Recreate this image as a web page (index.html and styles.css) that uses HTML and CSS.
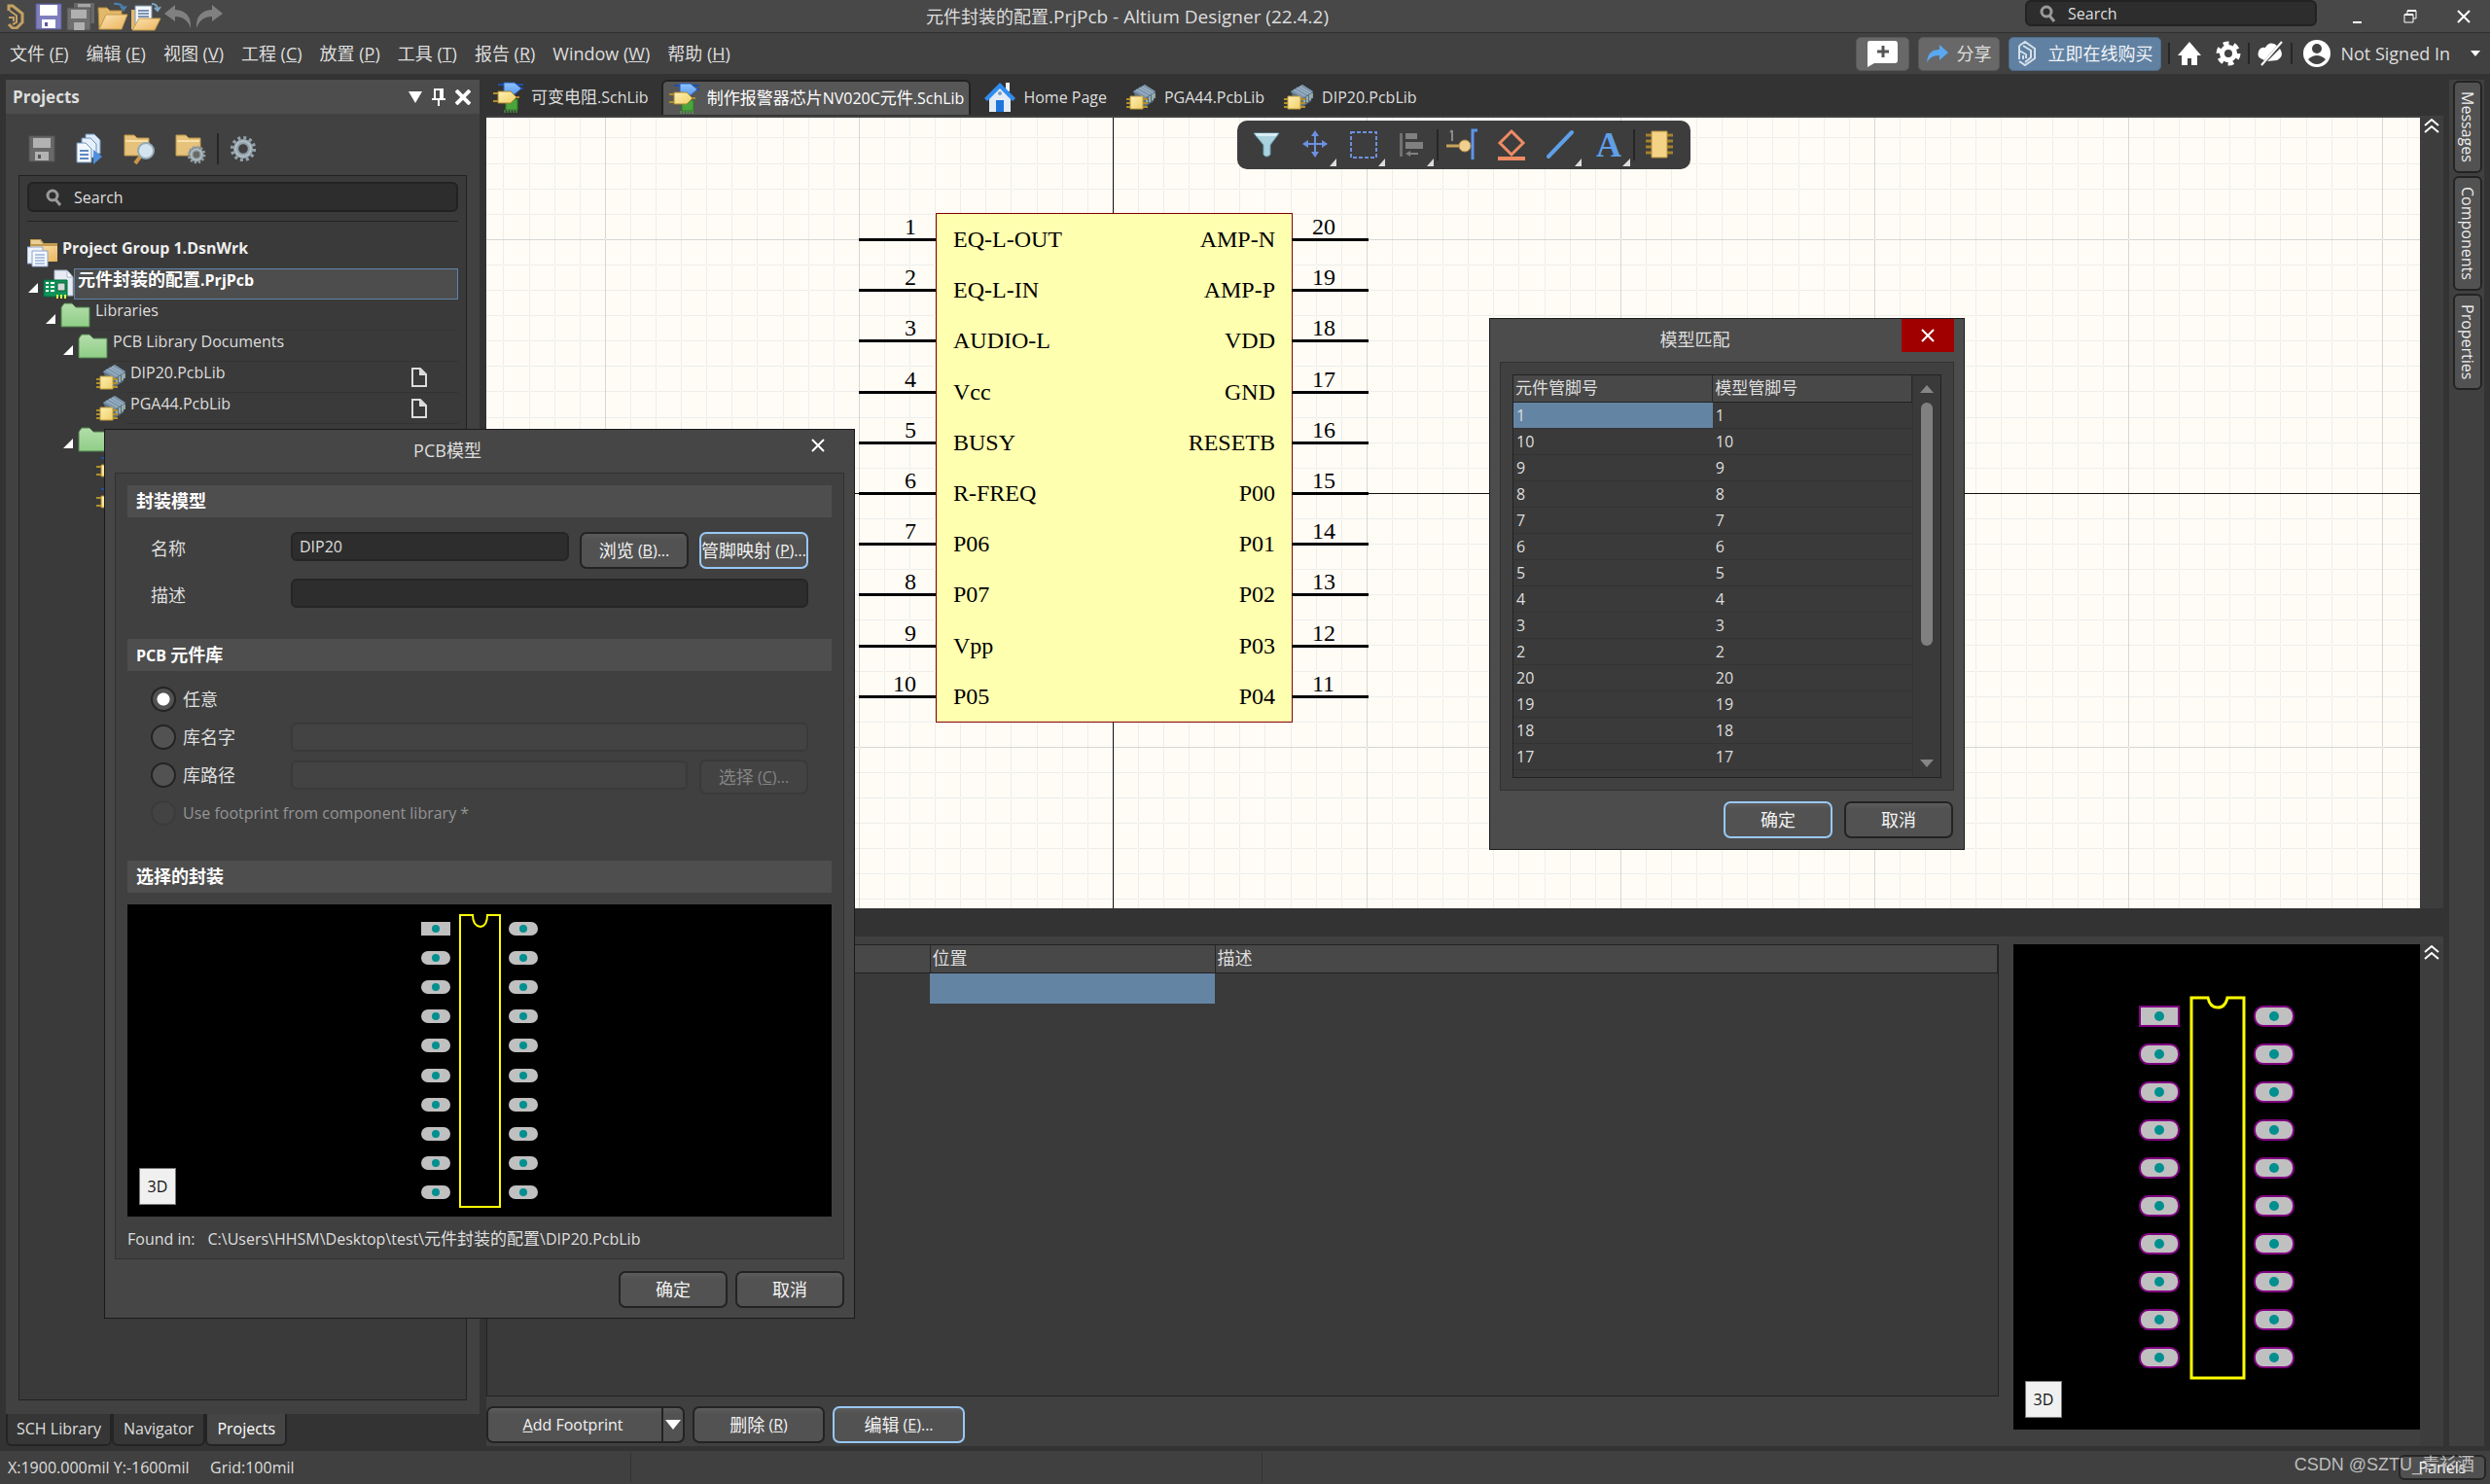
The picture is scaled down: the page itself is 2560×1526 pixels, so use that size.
FILE: index.html
```html
<!DOCTYPE html>
<html lang="zh-CN">
<head>
<meta charset="utf-8">
<title>元件封装的配置.PrjPcb - Altium Designer (22.4.2)</title>
<link rel="stylesheet" href="styles.css">
</head>
<body>
<svg class="defs" aria-hidden="true">
  <defs>
    <linearGradient id="g-green" x2="0" y2="1"><stop offset="0" stop-color="#b4ddab"/><stop offset="1" stop-color="#8fce86"/></linearGradient>
    <linearGradient id="g-tan" x2="1" y2="1"><stop offset="0" stop-color="#fbe3b4"/><stop offset="1" stop-color="#eab45c"/></linearGradient>
    <linearGradient id="g-chip" x2="1" y2="1"><stop offset="0" stop-color="#fdf0b4"/><stop offset="1" stop-color="#f0cf66"/></linearGradient>
    <linearGradient id="g-blue" x2="0" y2="1"><stop offset="0" stop-color="#8cc4ff"/><stop offset="1" stop-color="#5f9cf0"/></linearGradient>
    <pattern id="grid" x="644" y="386" width="261" height="261" patternUnits="userSpaceOnUse">
      <path d="M26 0h1v261h-1zM52 0h1v261h-1zM78 0h1v261h-1zM104 0h1v261h-1zM130 0h1v261h-1zM156 0h1v261h-1zM183 0h1v261h-1zM209 0h1v261h-1zM235 0h1v261h-1zM0 26v1h261v-1zM0 52v1h261v-1zM0 78v1h261v-1zM0 104v1h261v-1zM0 130v1h261v-1zM0 156v1h261v-1zM0 183v1h261v-1zM0 209v1h261v-1zM0 235v1h261v-1z" fill="#edeeea"/>
      <path d="M0 0h1v261h-1zM0 0v1h261v-1z" fill="#d6d7d3"/>
    </pattern>
  </defs>
  <symbol id="i-logo" viewBox="0 0 18 26"><path d="M2 7V2h4l10 8v9l-6 6H6l-4-4" fill="none" stroke="#c3a062" stroke-width="3"/><path d="M3 7l7 5v7l-4 2M2 14h5v4" fill="none" stroke="#c3a062" stroke-width="2"/></symbol>
  <symbol id="i-floppy" viewBox="0 0 28 28"><path d="M1 1h26v26H1z" fill="#7f7fbd" stroke="#5a5a9a"/><path d="M5 2h18v11H5zM7 17h14v9H7z" fill="#fff"/><path d="M10 20h3v4h-3z" fill="#5a5a9a"/></symbol>
  <symbol id="i-floppy-off" viewBox="0 0 28 28"><path d="M1 1h26v26H1z" fill="#686868" stroke="#555"/><path d="M5 3h18v10H5zM7 17h14v9H7z" fill="#b2b2b2"/><path d="M10 20h3v4h-3z" fill="#555"/></symbol>
  <symbol id="i-save-all" viewBox="0 0 30 30"><path d="M8 1h21v21H8z" fill="#686868"/><path d="M12 2h13v5H12z" fill="#a5a5a5"/><path d="M1 6h24v23H1z" fill="#707070" stroke="#505050"/><path d="M5 8h16v9H5zM8 21h11v8H8z" fill="#b0b0b0"/></symbol>
  <symbol id="i-open" viewBox="0 0 32 30"><path d="M1 6h9l3 3h12v5H9L2 28z" fill="#e2b96a" stroke="#b98c3c"/><path d="M9 13h22l-6 15H2z" fill="url(#g-tan)" stroke="#c79a48"/><path d="M17 2q9-1 10 6" fill="none" stroke="#4b7fae" stroke-width="2"/><path d="M23 5l8-1-4 6z" fill="#4b7fae"/></symbol>
  <symbol id="i-open-doc" viewBox="0 0 32 30"><path d="M1 8h5v20H1z" fill="#e2b96a"/><path d="M5 4h17v22H5z" fill="#f4f7fc" stroke="#7d93b3"/><path d="M8 9h11M8 12h11M8 15h11" stroke="#7d93b3" stroke-width="2"/><path d="M9 17h22l-6 12H2z" fill="url(#g-tan)" stroke="#c79a48"/><path d="M22 2q6 0 6 6M25 6l3 3 3-4" fill="none" stroke="#7ea5c5" stroke-width="2"/></symbol>
  <symbol id="i-undo" viewBox="0 0 30 26"><path d="M12 1L1 10l11 8v-5q12 0 16 12Q29 7 12 6z" fill="#808080"/></symbol>
  <symbol id="i-sch" viewBox="0 0 32 32"><path d="M6 3h26M24 7h8" stroke="#1d4fa8" stroke-width="2"/><path d="M12 1h11l7 6-7 6H12z" fill="url(#g-blue)" stroke="#2b5fb8"/><path d="M14 18h12v11H14z" fill="#4aa63c" stroke="#2e7a25"/><path d="M13 32v-3m3 3v-3m3 3v-3m3 3v-3m3 3v-3" stroke="#5cb84e"/><path d="M1 12h8M1 20h8M22 16h6" stroke="#b0902a" stroke-width="2"/><path d="M6 10h13l6 6-6 6H6z" fill="url(#g-chip)" stroke="#a8842a"/></symbol>
  <symbol id="i-pcblib" viewBox="0 0 32 28"><path d="M8 8L20 1l11 7-2 10-9 6-8-6z" fill="#5d7181"/><path d="M8 8L20 1l11 7-11 7z" fill="#7d96ad"/><path d="M11 6l12 7M14 4l12 7M17 3l12 7" stroke="#a9bdcc"/><path d="M22 15v6m3-8v6m3-8v6m2-7v5" stroke="#a9c0bd" stroke-width="1.5"/><path d="M1 16h5M1 20h5M1 24h5M17 16h6M17 20h6M17 24h6" stroke="#b0902a" stroke-width="2"/><path d="M5 13h13v13H5z" fill="url(#g-chip)" stroke="#c29c3e"/></symbol>
  <symbol id="i-home" viewBox="0 0 32 32"><path d="M22 1h4v9h-4z" fill="#eef2f8"/><path d="M5 14L16 4l11 10v17H5z" fill="#e4ebf4"/><path d="M16 1L0 17l3 3L16 7l13 13 3-3z" fill="#2f8df0"/><path d="M12 19h8v12h-8z" fill="#1c74dc"/><circle cx="16" cy="12" r="2" fill="#7e9cc0"/></symbol>
  <symbol id="i-docs" viewBox="0 0 28 32"><path d="M10 1h9l6 6v14H10z" fill="#dce9f6" stroke="#6f93bd"/><path d="M6 5h9l6 6v14H6z" fill="#e6f0fa" stroke="#6f93bd"/><path d="M1 10h9l6 6v14H1z" fill="#f2f7fc" stroke="#6f93bd"/><path d="M4 18h9M4 22h9M4 26h9" stroke="#5f8abf" stroke-width="2"/><path d="M18 17l9 7-9 8z" fill="#4f8fdd"/></symbol>
  <symbol id="i-folder-find" viewBox="0 0 32 32"><path d="M1 2h10l3 3h12v18H1z" fill="#e6c27a" stroke="#c09548"/><path d="M2 8h23" stroke="#f7e0ad" stroke-width="2"/><path d="M18 23l-6 8" stroke="#c8964a" stroke-width="4"/><circle cx="23" cy="18" r="8" fill="#d4e4ef" stroke="#93a9b8" stroke-width="2"/></symbol>
  <symbol id="i-gear" viewBox="0 0 32 32"><circle cx="16" cy="16" r="13" fill="none" stroke="#93a2ab" stroke-width="4" stroke-dasharray="3.4 3.4"/><circle cx="16" cy="16" r="8.500" fill="none" stroke="#93a2ab" stroke-width="6"/><circle cx="16" cy="16" r="9" fill="none" stroke="#b2bec5" stroke-width="2"/></symbol>
  <symbol id="i-folder-gear" viewBox="0 0 32 32"><path d="M1 2h10l3 3h12v18H1z" fill="#e6c27a" stroke="#c09548"/><path d="M2 8h23" stroke="#f7e0ad" stroke-width="2"/><circle cx="22" cy="22" r="8" fill="#6a6a62"/><use href="#i-gear" x="12" y="12" width="20" height="20"/></symbol>
  <symbol id="i-group" viewBox="0 0 32 30"><path d="M3 1h11l3 4h14v19H3z" fill="#c39a50"/><path d="M4 2h9l3 4H4z" fill="#e8cf98"/><path d="M4 8h27v16H4z" fill="url(#g-tan)"/><path d="M0 9h16v17H0z" fill="#edf3fb" stroke="#8ea3c6"/><path d="M5 13h16v16H5z" fill="#f5f9fe" stroke="#8ea3c6"/><path d="M8 17h10M8 20h10M8 23h10M8 26h10" stroke="#6f8fc2"/></symbol>
  <symbol id="i-prj" viewBox="0 0 32 30"><path d="M12 1h13l6 7v19H12z" fill="#e6ebf4" stroke="#aab6ca"/><path d="M25 1l6 7h-6z" fill="#fff" stroke="#aab6ca"/><path d="M1 11h24v17H1z" fill="#0f9359" stroke="#056a3d"/><path d="M3 14h3m2 0h4M3 18h3m2 0h4M3 22h3m2 0h4" stroke="#fff" stroke-width="2"/><path d="M15 14h8v8h-8z" fill="#d4dad8" stroke="#0a5c38"/><path d="M15 26v4m4-4v4m4-4v4" stroke="#e5f14a" stroke-width="2"/></symbol>
  <symbol id="i-folder" viewBox="0 0 32 26"><path d="M1 25V5l3-4h8l4 4h14v20z" fill="url(#g-green)" stroke="#4f7f4b"/></symbol>
  <symbol id="i-tri" viewBox="0 0 10 10"><path d="M10 0v10H0z" fill="#fff"/></symbol>
  <symbol id="i-page" viewBox="0 0 16 20"><path d="M1 1h8l6 6v12H1z" fill="none" stroke="#dcdcdc" stroke-width="2"/><path d="M8 1l7 7H8z" fill="#dcdcdc"/></symbol>
  <symbol id="i-mag" viewBox="0 0 18 18"><circle cx="8" cy="7" r="5" fill="none" stroke="#9a9a9a" stroke-width="3"/><path d="M11 11l5 6" stroke="#9a9a9a" stroke-width="3"/></symbol>
  <symbol id="i-x" viewBox="0 0 16 16"><path d="M2 2l12 12M14 2L2 14" stroke="#fff" stroke-width="2"/></symbol>
  <symbol id="i-chev" viewBox="0 0 16 16"><path d="M1 8l7-6 7 6M1 15l7-6 7 6" fill="none" stroke="#fff" stroke-width="2"/></symbol>
  <symbol id="i-down" viewBox="0 0 16 10"><path d="M0 0h16l-8 10z" fill="#fff"/></symbol>

  <g id="pad"><rect x="-15" y="-7" width="30" height="14" rx="7" fill="#c0c0c0"/><circle r="4" fill="#008f8f"/></g>
  <g id="padl"><rect x="-20" y="-10" width="40" height="20" rx="9" fill="#c0c0c0" stroke="#800080" stroke-width="2"/><circle r="5" fill="#008f8f"/></g>
  <g id="pads"><use href="#pad" y="30"/><use href="#pad" y="60"/><use href="#pad" y="90"/><use href="#pad" y="120"/><use href="#pad" y="151"/><use href="#pad" y="181"/><use href="#pad" y="211"/><use href="#pad" y="241"/><use href="#pad" y="271"/></g>
  <g id="padsl"><use href="#padl" y="39"/><use href="#padl" y="78"/><use href="#padl" y="117"/><use href="#padl" y="156"/><use href="#padl" y="195"/><use href="#padl" y="234"/><use href="#padl" y="273"/><use href="#padl" y="312"/><use href="#padl" y="351"/></g>
</svg>

<div class="app">
  <header class="titlebar">
    <div class="quick">
      <svg width="18" height="26"><use href="#i-logo"/></svg>
      <svg class="q-save" width="28" height="28"><use href="#i-floppy"/></svg>
      <svg width="30" height="30"><use href="#i-save-all"/></svg>
      <svg width="32" height="30"><use href="#i-open"/></svg>
      <svg width="32" height="30"><use href="#i-open-doc"/></svg>
      <svg width="30" height="26"><use href="#i-undo"/></svg>
      <svg class="redo" width="30" height="26"><use href="#i-undo"/></svg>
    </div>
    <h1><span class="zh">元件封装的配置</span>.PrjPcb - Altium Designer (22.4.2)</h1>
    <label class="search top-search"><svg width="18" height="18"><use href="#i-mag"/></svg><input type="search" placeholder="Search" aria-label="Search"></label>
    <div class="winctl">
      <button aria-label="Minimize"><svg width="16" height="16"><path d="M4 13h9v2H4z" fill="#fff"/></svg></button>
      <button aria-label="Restore"><svg width="16" height="16"><path d="M5 5V2h9v8h-3M2 6h9v8H2z" fill="none" stroke="#fff" stroke-width="1"/><path d="M5 2h9M2 6h9" stroke="#fff" stroke-width="2"/></svg></button>
      <button aria-label="Close"><svg width="16" height="16"><use href="#i-x"/></svg></button>
    </div>
  </header>

  <div class="menubar">
    <nav class="menu">
      <a href="#"><span class="zh">文件</span> (<u>F</u>)</a>
      <a href="#"><span class="zh">编辑</span> (<u>E</u>)</a>
      <a href="#"><span class="zh">视图</span> (<u>V</u>)</a>
      <a href="#"><span class="zh">工程</span> (<u>C</u>)</a>
      <a href="#"><span class="zh">放置</span> (<u>P</u>)</a>
      <a href="#"><span class="zh">工具</span> (<u>T</u>)</a>
      <a href="#"><span class="zh">报告</span> (<u>R</u>)</a>
      <a href="#">Window (<u>W</u>)</a>
      <a href="#"><span class="zh">帮助</span> (<u>H</u>)</a>
    </nav>
    <div class="account">
      <button class="pill comment" aria-label="Comment"><svg width="34" height="28"><path d="M3 1h26q3 0 3 3v17q0 3-3 3H8l-7 4V4q0-3 2-3z" fill="#fff"/><path d="M17 6v12M11 12h12" stroke="#555" stroke-width="3"/></svg></button>
      <button class="pill share"><svg width="22" height="18"><path d="M13 0l9 8-9 8v-5Q5 10 0 18 1 5 13 5z" fill="#5aa7f2"/></svg><span class="zh">分享</span></button>
      <button class="pill buy"><svg width="20" height="28" fill="none" stroke="#d5e0ea" stroke-width="2"><path d="M2 6l6-4 10 7v10l-10 7-6-4M2 6v5l7 4v4M6 6l8 5v7l-6 5M2 11v9M6 16v4"/></svg><span class="zh">立即在线购买</span></button>
      <span class="vsep"></span>
      <svg width="26" height="26"><path d="M13 1L1 15h4v10h6v-7h4v7h6V15h4z" fill="#fff"/></svg>
      <svg class="m-gear" width="26" height="26"><circle cx="13" cy="13" r="6.500" fill="none" stroke="#fff" stroke-width="5"/><circle cx="13" cy="13" r="10" fill="none" stroke="#fff" stroke-width="5" stroke-dasharray="5.500 4.970"/></svg>
      <span class="vsep"></span>
      <svg width="28" height="26"><path d="M6 19q-6-2-4-8 2-5 7-4 3-6 9-4l3 2L8 20zM11 21L24 8q5 8-3 12z" fill="#fff"/><path d="M5 25L26 1" stroke="#fff" stroke-width="2"/></svg>
      <span class="vsep"></span>
      <svg class="user" width="28" height="28"><circle cx="14" cy="14" r="14" fill="#fff"/><circle cx="14" cy="9" r="5" fill="#414141"/><path d="M5 20q9-8 18 0-4 5-9 5t-9-5z" fill="#414141"/></svg>
      <a class="signin" href="#">Not Signed In</a>
      <svg class="caret" width="10" height="6"><path d="M0 0h10L5 6z" fill="#fff"/></svg>
    </div>
  </div>

  <div class="work">
    <aside class="left">
      <section class="projects">
        <header class="phead"><h2>Projects</h2>
          <svg width="14" height="12"><path d="M0 0h14L7 12z" fill="#fff"/></svg>
          <svg width="14" height="18"><path d="M3 1h8v10H3zM9 1v10M0 11h14M7 11v7" fill="none" stroke="#fff" stroke-width="2"/></svg>
          <svg class="px" width="16" height="16"><path d="M1 1l14 14M15 1L1 15" stroke="#fff" stroke-width="4"/></svg>
        </header>
        <div class="ptools">
          <svg width="28" height="28"><use href="#i-floppy-off"/></svg>
          <svg width="28" height="32"><use href="#i-docs"/></svg>
          <svg width="32" height="32"><use href="#i-folder-find"/></svg>
          <svg width="32" height="32"><use href="#i-folder-gear"/></svg>
          <span class="vsep"></span>
          <svg width="28" height="28"><use href="#i-gear"/></svg>
        </div>
        <div class="pbody">
          <label class="search"><svg width="18" height="18"><use href="#i-mag"/></svg><input type="search" placeholder="Search" aria-label="Search projects"></label>
          <ul class="tree">
            <li class="root"><svg width="32" height="30"><use href="#i-group"/></svg><span class="name bold">Project Group 1.DsnWrk</span></li>
            <li class="l1"><svg class="tri" width="10" height="10"><use href="#i-tri"/></svg><svg width="32" height="30"><use href="#i-prj"/></svg><span class="name bold sel"><span class="zh">元件封装的配置</span>.PrjPcb</span></li>
            <li class="l2"><svg class="tri" width="10" height="10"><use href="#i-tri"/></svg><svg width="32" height="26"><use href="#i-folder"/></svg><span class="name">Libraries</span></li>
            <li class="l3"><svg class="tri" width="10" height="10"><use href="#i-tri"/></svg><svg width="32" height="26"><use href="#i-folder"/></svg><span class="name">PCB Library Documents</span></li>
            <li class="l4"><svg width="32" height="28"><use href="#i-pcblib"/></svg><span class="name">DIP20.PcbLib<svg width="16" height="20"><use href="#i-page"/></svg></span></li>
            <li class="l4"><svg width="32" height="28"><use href="#i-pcblib"/></svg><span class="name">PGA44.PcbLib<svg width="16" height="20"><use href="#i-page"/></svg></span></li>
            <li class="l3"><svg class="tri" width="10" height="10"><use href="#i-tri"/></svg><svg width="32" height="26"><use href="#i-folder"/></svg></li>
            <li class="l4"><svg width="32" height="32"><use href="#i-sch"/></svg></li>
            <li class="l4"><svg width="32" height="32"><use href="#i-sch"/></svg></li>
          </ul>
        </div>
      </section>
      <nav class="ptabs"><a href="#">SCH Library</a><a href="#">Navigator</a><a href="#" class="on">Projects</a></nav>
    </aside>

    <main class="center">
      <nav class="tabs">
        <a href="#"><svg width="32" height="32"><use href="#i-sch"/></svg><span><span class="zh">可变电阻</span>.SchLib</span></a>
        <a href="#" class="on"><svg width="32" height="32"><use href="#i-sch"/></svg><span><span class="zh">制作报警器芯片</span>NV020C<span class="zh">元件</span>.SchLib</span></a>
        <a href="#"><svg width="32" height="32"><use href="#i-home"/></svg><span>Home Page</span></a>
        <a href="#"><svg width="32" height="28"><use href="#i-pcblib"/></svg><span>PGA44.PcbLib</span></a>
        <a href="#"><svg width="32" height="28"><use href="#i-pcblib"/></svg><span>DIP20.PcbLib</span></a>
      </nav>
      <div class="pane editor">
        <div class="canvas">
          <svg class="sheet" width="100%" height="100%">
            <rect width="100%" height="100%" fill="#fffcf6"/>
            <rect width="100%" height="100%" fill="url(#grid)"/>
            <path d="M644 0h1v2000h-1zM0 386v1h3000v-1z" fill="#111"/>
            <rect x="462" y="98" width="366" height="523" fill="#ffffb0" stroke="#800000" shape-rendering="crispEdges"/>
            <path d="M383 125h79M383 177h79M383 229h79M383 282h79M383 334h79M383 386h79M383 438h79M383 490h79M383 543h79M383 595h79M828 125h79M828 177h79M828 229h79M828 282h79M828 334h79M828 386h79M828 438h79M828 490h79M828 543h79M828 595h79" stroke="#000" stroke-width="3" shape-rendering="crispEdges"/>
            <g class="pin end">
              <text x="442" y="120">1</text><text x="442" y="172">2</text><text x="442" y="224">3</text><text x="442" y="277">4</text><text x="442" y="329">5</text><text x="442" y="381">6</text><text x="442" y="433">7</text><text x="442" y="485">8</text><text x="442" y="538">9</text><text x="442" y="590">10</text>
              <text x="811" y="133">AMP-N</text><text x="811" y="185">AMP-P</text><text x="811" y="237">VDD</text><text x="811" y="290">GND</text><text x="811" y="342">RESETB</text><text x="811" y="394">P00</text><text x="811" y="446">P01</text><text x="811" y="498">P02</text><text x="811" y="551">P03</text><text x="811" y="603">P04</text>
            </g>
            <g class="pin">
              <text x="480" y="133">EQ-L-OUT</text><text x="480" y="185">EQ-L-IN</text><text x="480" y="237">AUDIO-L</text><text x="480" y="290">Vcc</text><text x="480" y="342">BUSY</text><text x="480" y="394">R-FREQ</text><text x="480" y="446">P06</text><text x="480" y="498">P07</text><text x="480" y="551">Vpp</text><text x="480" y="603">P05</text>
              <text x="849" y="120">20</text><text x="849" y="172">19</text><text x="849" y="224">18</text><text x="849" y="277">17</text><text x="849" y="329">16</text><text x="849" y="381">15</text><text x="849" y="433">14</text><text x="849" y="485">13</text><text x="849" y="538">12</text><text x="849" y="590">11</text>
            </g>
          </svg>
          <div class="floatbar">
            <button aria-label="Filter"><svg width="50" height="50"><path d="M12 13h26l-9 12v10q-4 4-7 0V25z" fill="#a9d2de" stroke="#6b9fb0"/><path d="M13 13h24l-2 3H15z" fill="#d8eef4"/></svg></button>
            <button aria-label="Move"><svg width="50" height="50"><path d="M25 13v24M13 24h24" stroke="#6d8fe0" stroke-width="2"/><path d="M25 10l4 6h-8zM25 38l4-6h-8zM12 24l6-4v8zM38 24l-6-4v8z" fill="#6d8fe0"/><path d="M47 39v8h-7z" fill="#ddd"/></svg></button>
            <button aria-label="Select"><svg width="50" height="50"><path d="M12 12h26v26H12z" fill="none" stroke="#6d8fe0" stroke-width="2" stroke-dasharray="4 2"/><path d="M47 39v8h-7z" fill="#ddd"/></svg></button>
            <button aria-label="Align"><svg width="50" height="50"><path d="M12 13h3v24h-3z" fill="#707070"/><path d="M18 13h12v6H18zM18 22h18v7H18z" fill="#808080"/><path d="M18 34l5-3v2h8v2h-8v2z" fill="#808080"/><path d="M47 39v8h-7z" fill="#ddd"/></svg></button>
            <span class="vsep"></span>
            <button aria-label="Pin"><svg width="50" height="50"><path d="M14 10v11M12 12l2-2" stroke="#888" stroke-width="2"/><path d="M8 26h14" stroke="#c9a35c" stroke-width="3"/><circle cx="27" cy="26" r="6" fill="#f0cf90" stroke="#b98f4a"/><path d="M40 10h-5v30" fill="none" stroke="#5f95ea" stroke-width="3"/></svg></button>
            <button aria-label="Error marker"><svg width="50" height="50"><path d="M25 11l12 12-12 12-12-12z" fill="none" stroke="#ee8b63" stroke-width="3"/><path d="M11 37h28v4H11z" fill="#ee8b63"/></svg></button>
            <button aria-label="Line"><svg width="50" height="50"><path d="M13 37l24-25" stroke="#5f9fe8" stroke-width="4" stroke-linecap="round"/><path d="M47 39v8h-7z" fill="#ddd"/></svg></button>
            <button aria-label="Text" class="letter">A<svg width="8" height="8"><path d="M8 0v8H0z" fill="#ddd"/></svg></button>
            <span class="vsep"></span>
            <button aria-label="Component"><svg width="50" height="50"><path d="M11 15h28M11 21h28M11 27h28M11 33h28" stroke="#a4822c" stroke-width="3"/><path d="M17 11h16v27H17z" fill="#f4d387" stroke="#b8923e"/></svg></button>
          </div>
        </div>
        <div class="rail"><svg width="16" height="16"><use href="#i-chev"/></svg></div>
      </div>

      <div class="pane models">
        <div class="mleft">
          <div class="mframe">
            <table>
              <colgroup><col class="c1"><col class="c2"><col></colgroup>
              <thead><tr><th></th><th><span class="zh">位置</span></th><th><span class="zh">描述</span></th></tr></thead>
              <tbody><tr><td></td><td class="picked"></td><td></td></tr></tbody>
            </table>
          </div>
          <div class="mbtns">
            <div class="split"><button class="btn"><u>A</u>dd Footprint</button><button class="btn" aria-label="More"><svg width="16" height="10"><use href="#i-down"/></svg></button></div>
            <button class="btn"><span class="zh">删除</span>&nbsp;(<u>R</u>)</button>
            <button class="btn focus"><span class="zh">编辑</span>&nbsp;(<u>E</u>)...</button>
          </div>
        </div>
        <div class="foot">
          <svg width="418" height="499">
            <g fill="none" stroke="#ff0" stroke-width="3"><path d="M200 55h-17v391h54V55h-17q-2 10-10 10t-10-10z"/></g>
            <rect x="130" y="64" width="40" height="20" fill="#c0c0c0" stroke="#800080" stroke-width="2"/><circle cx="150" cy="74" r="5" fill="#008f8f"/>
            <use href="#padsl" x="150" y="74"/><use href="#padl" x="268" y="74"/><use href="#padsl" x="268" y="74"/>
          </svg>
          <button class="three">3D</button>
        </div>
        <div class="rail"><svg width="16" height="16"><use href="#i-chev"/></svg></div>
      </div>
    </main>

    <nav class="dock"><a href="#">Messages</a><a href="#">Components</a><a href="#">Properties</a></nav>
  </div>

  <footer class="status">
    <span class="coord">X:1900.000mil Y:-1600mil</span><span class="gridsz">Grid:100mil</span><span class="hint"></span>
    <button class="panels">Panels</button>
    <span class="mark">CSDN @SZTU_青衫酒</span>
  </footer>
</div>

<section class="dialog pcb" role="dialog" aria-labelledby="pcb-title">
  <header><h2 id="pcb-title">PCB<span class="zh">模型</span></h2><button class="x" aria-label="Close"><svg width="16" height="16"><use href="#i-x"/></svg></button></header>
  <div class="group">
    <h3 class="zh">封装模型</h3>
    <div class="form">
      <div class="line"><label class="zh lab" for="f-name">名称</label><input id="f-name" class="field" value="DIP20"><button class="btn"><span class="zh">浏览</span>&nbsp;(<u>B</u>)...</button><button class="btn focus tight"><span class="zh">管脚映射</span>&nbsp;(<u>P</u>)...</button></div>
      <div class="line"><label class="zh lab" for="f-desc">描述</label><input id="f-desc" class="field"></div>
    </div>
    <h3>PCB <span class="zh">元件库</span></h3>
    <div class="radios">
      <div class="opt"><label><input type="radio" name="lib" checked><span class="zh">任意</span></label></div>
      <div class="opt"><label><input type="radio" name="lib"><span class="zh">库名字</span></label><input class="field" disabled aria-label="库名字"></div>
      <div class="opt"><label><input type="radio" name="lib"><span class="zh">库路径</span></label><input class="field" disabled aria-label="库路径"><button class="btn" disabled><span class="zh">选择</span>&nbsp;(<u>C</u>)...</button></div>
      <div class="opt off"><label><input type="radio" name="lib" disabled>Use footprint from component library *</label></div>
    </div>
    <h3 class="zh">选择的封装</h3>
    <div class="preview">
      <svg width="126" height="321">
        <path d="M56 11H43v300h41V11H71q0 11-7 12-8-1-8-12z" fill="none" stroke="#ff0" stroke-width="2"/>
        <rect x="3" y="18" width="30" height="14" fill="#c0c0c0"/><circle cx="18" cy="25" r="4" fill="#008f8f"/>
        <use href="#pads" x="18" y="25"/><use href="#pad" x="108" y="25"/><use href="#pads" x="108" y="25"/>
      </svg>
      <button class="three">3D</button>
    </div>
    <p class="found"><span>Found in:</span><span>C:\Users\HHSM\Desktop\test\<span class="zh">元件封装的配置</span>\DIP20.PcbLib</span></p>
  </div>
  <footer><button class="btn"><span class="zh">确定</span></button><button class="btn"><span class="zh">取消</span></button></footer>
</section>

<section class="dialog match" role="dialog" aria-labelledby="match-title">
  <header><h2 id="match-title" class="zh">模型匹配</h2><button class="x" aria-label="Close"><svg width="16" height="16"><use href="#i-x"/></svg></button></header>
  <div class="group">
    <div class="list">
      <div class="tblwrap">
      <table>
        <thead><tr><th>元件管脚号</th><th>模型管脚号</th></tr></thead>
        <tbody>
          <tr><td class="picked">1</td><td>1</td></tr>
          <tr><td>10</td><td>10</td></tr>
          <tr><td>9</td><td>9</td></tr>
          <tr><td>8</td><td>8</td></tr>
          <tr><td>7</td><td>7</td></tr>
          <tr><td>6</td><td>6</td></tr>
          <tr><td>5</td><td>5</td></tr>
          <tr><td>4</td><td>4</td></tr>
          <tr><td>3</td><td>3</td></tr>
          <tr><td>2</td><td>2</td></tr>
          <tr><td>20</td><td>20</td></tr>
          <tr><td>19</td><td>19</td></tr>
          <tr><td>18</td><td>18</td></tr>
          <tr><td>17</td><td>17</td></tr>
        </tbody>
      </table>
      </div>
      <div class="scroll"><svg width="14" height="8"><path d="M7 0l7 8H0z" fill="#858585"/></svg><i></i><svg width="14" height="8"><path d="M7 8l7-8H0z" fill="#858585"/></svg></div>
    </div>
  </div>
  <footer><button class="btn focus"><span class="zh">确定</span></button><button class="btn"><span class="zh">取消</span></button></footer>
</section>
</body>
</html>
```

FILE: styles.css
```css
* { box-sizing: border-box; }
body {
  margin: 0;
  min-height: 100vh;
  background: #333;
  color: #dedede;
  font: 16px/24px "Open Sans", "Noto Sans CJK SC", sans-serif;
}
.defs { position: absolute; width: 0; height: 0; }
svg { display: block; flex: none; }
a { color: inherit; text-decoration: none; }
button { font: inherit; color: inherit; border: 0; padding: 0; background: none; }
input { font: inherit; color: inherit; }
input::placeholder { color: #dedede; opacity: 1; }
h1, h2, h3, p, ul { margin: 0; padding: 0; font-size: 16px; font-weight: 400; list-style: none; }
.zh { font-size: 18px; }
.vsep { width: 2px; background: #262626; flex: none; }

.app { display: flex; flex-direction: column; min-height: 100vh; }

/* title bar */
.titlebar { display: flex; align-items: center; height: 34px; background: #484848; border-bottom: 1px solid #303030; }
.quick { display: flex; align-items: center; gap: 2px; padding-left: 7px; width: 236px; }
.q-save { margin-left: 9px; margin-right: 2px; }
.redo { transform: scaleX(-1); }
.titlebar h1 { flex: 1; text-align: center; font-size: 19px; }
.search { display: flex; align-items: center; gap: 12px; height: 31px; padding: 0 16px; background: #2d2d2d; border: 2px solid #222; border-radius: 6px; }
.search input { flex: 1; min-width: 0; border: 0; background: none; padding: 0; outline: 0; line-height: 20px; }
.top-search { width: 300px; height: 27px; margin-bottom: 6px; padding: 0 12px; }
.winctl { display: flex; width: 178px; padding-left: 14px; }
.winctl button { width: 55px; display: flex; justify-content: center; }

/* menu bar */
.menubar { display: flex; justify-content: space-between; height: 42px; background: #414141; }
.menu { display: flex; align-items: center; gap: 18px; padding-left: 10px; font-size: 18px; white-space: nowrap; }
.account { display: flex; align-items: center; padding-right: 10px; }
.account .vsep { height: 22px; margin: 0 7px; }
.pill { display: flex; align-items: center; justify-content: center; gap: 8px; height: 35px; margin-right: 9px; background: #686868; border: 1px solid #585858; border-radius: 5px; }
.comment { width: 55px; }
.share { width: 84px; }
.buy { width: 157px; gap: 11px; margin-right: 0; background: #6181a2; border-color: #4d6c8c; color: #f0f4f8; }
.m-gear { margin-left: 14px; }
.user { margin-left: 4px; }
.signin { margin-left: 10px; font-size: 18px; }
.caret { margin-left: 21px; }

/* work area */
.work { display: flex; flex: 1; padding: 6px 6px 5px; gap: 7px; }
.left { width: 487px; display: flex; flex-direction: column; }
.projects { flex: 1; display: flex; flex-direction: column; background: #414141; padding-bottom: 14px; }
.phead { display: flex; align-items: center; height: 35px; padding: 0 9px 0 7px; gap: 10px; background: #4d4d4d; }
.phead h2 { flex: 1; font-weight: 700; font-size: 17px; }
.ptools { display: flex; align-items: center; gap: 21px; height: 64px; margin-top: 4px; padding-left: 23px; }
.ptools .vsep { height: 32px; margin: 0 -10px; }
.pbody { flex: 1; margin: -5px 13px 0; padding: 6px 8px; background: #3a3a3a; border: 1px solid #222; }
.tree { margin-top: 9px; padding-top: 16px; border-top: 1px solid #222; }
.tree li { display: flex; align-items: center; height: 32px; }
.root { padding-left: 0; }
.l1 { padding-left: 1px; }
.l2 { padding-left: 19px; }
.l3 { padding-left: 37px; }
.l4 { padding-left: 70px; }
.tri { margin: 8px 5px 0 0; }
.name { flex: 1; display: flex; align-self: stretch; padding: 0 4px; line-height: 22px; border-bottom: 1px solid #333; }
.root .name, .l1 .name { border-color: transparent; }
.name > svg { margin: 6px 28px 0 auto; }
.bold { font-weight: 700; color: #eee; }
.l1 .sel { display: block; background: #4d4d4d; border: 1px solid #5f84aa; color: #fff; padding: 0 3px; line-height: 20px; }
.ptabs { display: flex; height: 33px; padding-right: 180px; }
.ptabs a { padding: 3px 10px 0; background: #363636; border: 2px solid #242424; border-top: 0; border-radius: 0 0 6px 6px; }
.ptabs a:first-child { padding: 3px 9px 0; }
.ptabs .on { background: #454545; color: #fff; }

.center { flex: 1; min-width: 0; display: flex; flex-direction: column; }
.tabs { display: flex; height: 37px; gap: 8px; white-space: nowrap; }
.tabs a { display: flex; align-items: center; gap: 8px; padding: 0 5px 0 6px; height: 36px; }
.tabs a.on { background: #575757; border: 2px solid #222; border-bottom: 0; border-radius: 6px 6px 0 0; color: #fff; padding: 0 5px; }
.tabs .zh { font-size: 17px; }
.pane { display: flex; background: #404040; }
.editor { flex: 1; padding-top: 2px; }
.canvas { flex: 1; position: relative; min-height: 640px; overflow: hidden; }
.sheet { position: absolute; inset: 0; }
.pin { font: 24px "Liberation Serif", serif; fill: #000; }
.end { text-anchor: end; }
.rail { width: 24px; padding-left: 4px; background: #3d3d3d; }
.floatbar { position: absolute; left: 772px; top: 3px; display: flex; width: 466px; height: 50px; padding-left: 5px; background: #3d3d3d; border-radius: 10px; }
.floatbar .vsep { height: 32px; margin-top: 9px; }
.letter { width: 50px; position: relative; font: bold 36px/50px "Liberation Serif", serif; color: #5f9fe8; }
.letter svg { position: absolute; right: 3px; bottom: 3px; }

.models { height: 524px; margin-top: 29px; padding-top: 8px; }
.mleft { flex: 1; }
.mframe { height: 465px; background: #3a3a3a; border: 1px solid #222; }
.mframe table { width: 100%; table-layout: fixed; border-collapse: collapse; }
.c1 { width: 455px; }
.c2 { width: 293px; }
.mframe th { height: 28px; padding: 0 2px; text-align: left; font-weight: 400; background: #484848; border-bottom: 1px solid #222; border-right: 1px solid #262626; line-height: 24px; }
.mframe td { height: 32px; }
.picked { background: #6484a4; }
.mbtns { display: flex; gap: 8px; margin-top: 10px; }
.btn { display: flex; align-items: center; justify-content: center; width: 136px; height: 38px; border: 2px solid #232323; border-radius: 7px; background: linear-gradient(#5c5c5c, #525252 6px); color: #f2f2f2; white-space: nowrap; }
.btn.focus { border-color: #99c8f6; }
.btn:disabled { background: #434343; border-color: #3a3a3a; color: #858585; }
.split { display: flex; }
.split .btn:first-child { width: 181px; padding-right: 4px; border-right-width: 1px; border-radius: 7px 0 0 7px; }
.split .btn:last-child { width: 23px; border-left-width: 1px; border-radius: 0 7px 7px 0; }
.foot { position: relative; width: 418px; height: 499px; margin-left: 15px; background: #000; }
.three { position: absolute; left: 12px; bottom: 12px; width: 38px; height: 38px; background: #f0f0f0; border: 1px solid #777; color: #111; }

.dock { display: flex; flex-direction: column; gap: 3px; width: 36px; padding: 1px 2px 0 4px; background: #404040; margin-left: -1px; }
.dock a { writing-mode: vertical-rl; width: 30px; padding: 9px 1px; line-height: 24px; background: #525252; border: 2px solid #232323; border-radius: 6px; color: #eee; }

.status { position: relative; display: flex; align-items: center; height: 34px; padding: 0 4px 0 8px; background: #404040; }
.coord { width: 208px; }
.gridsz { width: 433px; }
.gridsz, .hint { height: 30px; line-height: 30px; border-right: 1px solid #333; }
.hint { width: 649px; }
.panels { width: 90px; height: 26px; margin-left: auto; line-height: 20px; background: #505050; border: 2px solid #262626; border-radius: 6px; color: #fff; }
.mark { position: absolute; right: 16px; top: 2px; font: 18px/24px "Liberation Sans", "Noto Sans CJK SC", sans-serif; color: #bdbdbd; }

/* dialogs */
.dialog { position: absolute; border: 1px solid #1a1a1a; background: #464646; }
.dialog > header { position: relative; height: 44px; text-align: center; }
.dialog > header h2 { line-height: 42px; font-size: 18px; }
.dialog .x { position: absolute; top: 0; display: flex; align-items: center; justify-content: center; width: 54px; height: 32px; }
.group { margin: 0 10px; background: #404040; border: 1px solid #303030; }
.dialog > footer { display: flex; justify-content: flex-end; gap: 8px; padding: 12px 10px 10px; }
.dialog .btn { width: 112px; flex: none; }

.pcb { left: 107px; top: 441px; width: 772px; }
.pcb > header h2 { padding-right: 66px; }
.pcb .x { right: 10px; }
.pcb .group { padding: 12px; }
.pcb h3 { height: 33px; padding-left: 9px; line-height: 33px; font-weight: 700; color: #fff; background: #4e4e4e; }
.form { display: grid; gap: 10px; padding: 15px 24px 32px; }
.line { display: flex; gap: 11px; }
.lab { width: 133px; height: 30px; line-height: 34px; }
.field { flex: 1; min-width: 0; height: 30px; padding: 0 7px; background: #2d2d2d; border: 2px solid #252525; border-radius: 6px; outline: 0; }
.field:disabled { background: #434343; border-color: #3a3a3a; }
.radios { padding: 9px 24px 30px; }
.opt { display: flex; align-items: center; gap: 12px; height: 39px; }
.opt label { display: flex; align-items: center; gap: 7px; min-width: 132px; white-space: nowrap; }
.opt .btn { height: 36px; margin-top: 4px; }
.off { color: #949494; }
input[type="radio"] { appearance: none; width: 26px; height: 26px; margin: 0; border: 2px solid #232323; border-radius: 50%; background: #525252; }
input[type="radio"]:checked { background: radial-gradient(circle, #fff 6px, #525252 7px); }
input[type="radio"]:disabled { background: #434343; border-color: #3b3b3b; }
.preview { position: relative; display: flex; justify-content: center; height: 321px; margin-top: 12px; background: #000; }
.found { display: flex; gap: 13px; height: 31px; padding-top: 11px; }
.found .zh { font-size: 17px; }

.match { left: 1531px; top: 327px; width: 489px; background: #4c4c4c; }
.match > header h2 { padding-right: 66px; }
.match .x { right: 10px; height: 34px; background: #a00000; }
.match .group { padding: 12px; }
.list { display: flex; height: 415px; background: #3a3a3a; border: 1px solid #222; }
.tblwrap { flex: 1; border-right: 1px solid #333; }
.match table { width: 100%; table-layout: fixed; border-collapse: collapse; font-size: 16px; }
.match th { height: 27px; padding: 0 2px; line-height: 22px; text-align: left; font-weight: 400; font-size: 17px; background: #484848; border-bottom: 1px solid #222; border-right: 1px solid #2a2a2a; }
.match td { height: 27px; padding: 0 3px; border-bottom: 1px solid #333; }
.scroll { display: flex; flex-direction: column; align-items: center; width: 28px; padding: 10px 0; gap: 10px; }
.scroll i { width: 12px; height: 250px; border-radius: 6px; background: #808080; }
.scroll svg:last-child { margin-top: auto; }
.match > footer { gap: 12px; padding: 11px 11px 11px; }
```
